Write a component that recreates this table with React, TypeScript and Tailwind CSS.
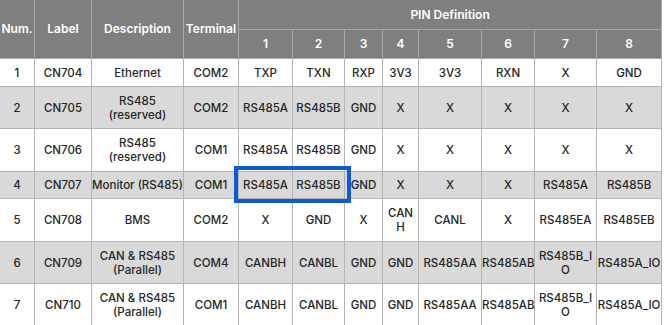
import type { ReactNode } from 'react';

const COLS = [35, 57, 92, 55, 54, 52, 38, 36, 63, 53, 62, 65];

type Row = {
  h: number;
  bg: string;
  cells: ReactNode[];
};

const ROWS: Row[] = [
  { h: 28, bg: 'bg-white', cells: ['1', 'CN704', 'Ethernet', 'COM2', 'TXP', 'TXN', 'RXP', '3V3', '3V3', 'RXN', 'X', 'GND'] },
  {
    h: 42,
    bg: 'bg-[#d9d9d9]',
    cells: ['2', 'CN705', <>RS485<br />(reserved)</>, 'COM2', 'RS485A', 'RS485B', 'GND', 'X', 'X', 'X', 'X', 'X'],
  },
  {
    h: 43,
    bg: 'bg-white',
    cells: ['3', 'CN706', <>RS485<br />(reserved)</>, 'COM1', 'RS485A', 'RS485B', 'GND', 'X', 'X', 'X', 'X', 'X'],
  },
  {
    h: 27,
    bg: 'bg-[#d9d9d9]',
    cells: ['4', 'CN707', 'Monitor (RS485)', 'COM1', 'RS485A', 'RS485B', 'GND', 'X', 'X', 'X', 'RS485A', 'RS485B'],
  },
  {
    h: 43,
    bg: 'bg-white',
    cells: ['5', 'CN708', 'BMS', 'COM2', 'X', 'GND', 'X', <>CAN<br />H</>, 'CANL', 'X', 'RS485EA', 'RS485EB'],
  },
  {
    h: 42,
    bg: 'bg-[#d9d9d9]',
    cells: ['6', 'CN709', <>CAN &amp; RS485<br />(Parallel)</>, 'COM4', 'CANBH', 'CANBL', 'GND', 'GND', 'RS485AA', 'RS485AB', <>RS485B_I<br />O</>, 'RS485A_IO'],
  },
  {
    h: 42,
    bg: 'bg-white',
    cells: ['7', 'CN710', <>CAN &amp; RS485<br />(Parallel)</>, 'COM1', 'CANBH', 'CANBL', 'GND', 'GND', 'RS485AA', 'RS485AB', <>RS485B_I<br />O</>, 'RS485A_IO'],
  },
];

const th = 'border border-[#a9a9a9] text-white font-semibold text-[12px] text-center align-middle p-0';
const td = 'border border-[#b4b4b4] text-[#262626] font-medium text-[11.5px] leading-[14px] text-center align-middle p-0 whitespace-nowrap';

export default function App() {
  return (
    <div
      className="relative w-[664px] h-[325px] overflow-hidden bg-white"
      style={{ fontFamily: 'Inter, "Noto Sans", sans-serif' }}
    >
      <table className="table-fixed border-collapse w-[663px] -ml-px -mt-px">
        <colgroup>
          {COLS.map((w, i) => (
            <col key={i} style={{ width: w }} />
          ))}
        </colgroup>
        <thead className="bg-[#7f7f7f]">
          <tr className="h-[30px]">
            <th rowSpan={2} className={th}>Num.</th>
            <th rowSpan={2} className={th}>Label</th>
            <th rowSpan={2} className={th}>Description</th>
            <th rowSpan={2} className={th}>Terminal</th>
            <th colSpan={8} className={th}>PIN Definition</th>
          </tr>
          <tr className="h-[29px]">
            {[1, 2, 3, 4, 5, 6, 7, 8].map(n => (
              <th key={n} className={th}>{n}</th>
            ))}
          </tr>
        </thead>
        <tbody>
          {ROWS.map((row, ri) => (
            <tr key={ri} className={row.bg} style={{ height: row.h }}>
              {row.cells.map((c, ci) => (
                <td key={ci} className={td}>{c}</td>
              ))}
            </tr>
          ))}
        </tbody>
      </table>

      {/* highlight around CN707 pins 1-2 */}
      <div className="absolute left-[234px] top-[166px] w-[117px] h-[37px] border-[4px] border-[#0a5bd6] pointer-events-none" />
    </div>
  );
}
